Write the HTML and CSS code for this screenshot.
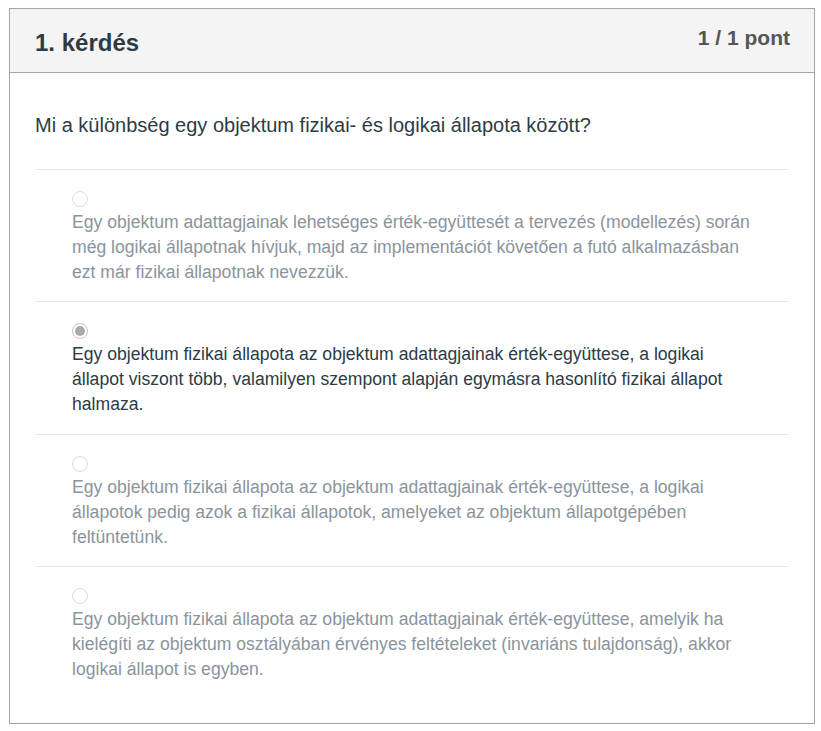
FILE: index.html
```html
<!DOCTYPE html>
<html lang="hu">
<head>
<meta charset="utf-8">
<title>1. kérdés</title>
<link rel="stylesheet" href="styles.css">
</head>
<body>
<div class="quiz">
  <div class="quiz-header">
    <h2 class="quiz-title">1. kérdés</h2>
    <div class="quiz-points">1 / 1 pont</div>
  </div>
  <div class="quiz-body">
    <p class="question">Mi a különbség egy objektum fizikai- és logikai állapota között?</p>
    <div class="answers">
      <div class="answer">
        <span class="radio"></span>
        <div class="answer-text">Egy objektum adattagjainak lehetséges érték-együttesét a tervezés (modellezés) során még logikai állapotnak hívjuk, majd az implementációt követően a futó alkalmazásban ezt már fizikai állapotnak nevezzük.</div>
      </div>
      <div class="answer selected">
        <span class="radio checked"></span>
        <div class="answer-text">Egy objektum fizikai állapota az objektum adattagjainak érték-együttese, a logikai állapot viszont több, valamilyen szempont alapján egymásra hasonlító fizikai állapot halmaza.</div>
      </div>
      <div class="answer">
        <span class="radio"></span>
        <div class="answer-text">Egy objektum fizikai állapota az objektum adattagjainak érték-együttese, a logikai állapotok pedig azok a fizikai állapotok, amelyeket az objektum állapotgépében feltüntetünk.</div>
      </div>
      <div class="answer">
        <span class="radio"></span>
        <div class="answer-text">Egy objektum fizikai állapota az objektum adattagjainak érték-együttese, amelyik ha kielégíti az objektum osztályában érvényes feltételeket (invariáns tulajdonság), akkor logikai állapot is egyben.</div>
      </div>
    </div>
  </div>
</div>
</body>
</html>
```

FILE: styles.css
```css
html, body {
  margin: 0;
  padding: 0;
  background: #ffffff;
}

body {
  font-family: "Liberation Sans", Arial, sans-serif;
  color: #2d3b45;
}

.quiz {
  box-sizing: border-box;
  margin: 8px 0 0 9px;
  width: 806px;
  height: 716px;
  border: 1px solid #a5a5a5;
}

.quiz-header {
  box-sizing: border-box;
  height: 64px;
  background: #f4f4f4;
  border-bottom: 1px solid #a5a5a5;
  padding: 0 24px 0 25px;
  display: flex;
  justify-content: space-between;
  align-items: flex-start;
}

.quiz-title {
  margin: 0;
  padding-top: 20px;
  font-size: 24px;
  line-height: 28px;
  font-weight: bold;
  color: #2d3b45;
}

.quiz-points {
  padding-top: 16px;
  font-size: 21px;
  line-height: 26px;
  font-weight: bold;
  color: #555555;
}

.quiz-body {
  padding: 0 25px;
}

.question {
  margin: 0;
  padding: 39px 0 31px;
  font-size: 20px;
  line-height: 26px;
  color: #2d3b45;
}

.answer {
  border-top: 1px solid #e8e8e8;
  padding: 21px 0 16.3px 37px;
}

.radio {
  display: block;
  box-sizing: border-box;
  width: 16px;
  height: 16px;
  margin-bottom: 3px;
  border-radius: 50%;
  border: 1px solid #dcdcdc;
  background: #ffffff;
}

.radio.checked {
  border: 1px solid #c4c4c8;
  background: #ffffff;
  position: relative;
}

.radio.checked::after {
  content: "";
  position: absolute;
  left: 2px;
  top: 2px;
  width: 10px;
  height: 10px;
  border-radius: 50%;
  background: #a9a9b3;
}

.answer-text {
  font-size: 17.6px;
  line-height: 25px;
  color: #8b949c;
  max-width: 683px;
}

.answer.selected .answer-text {
  color: #2d3b45;
}
```
